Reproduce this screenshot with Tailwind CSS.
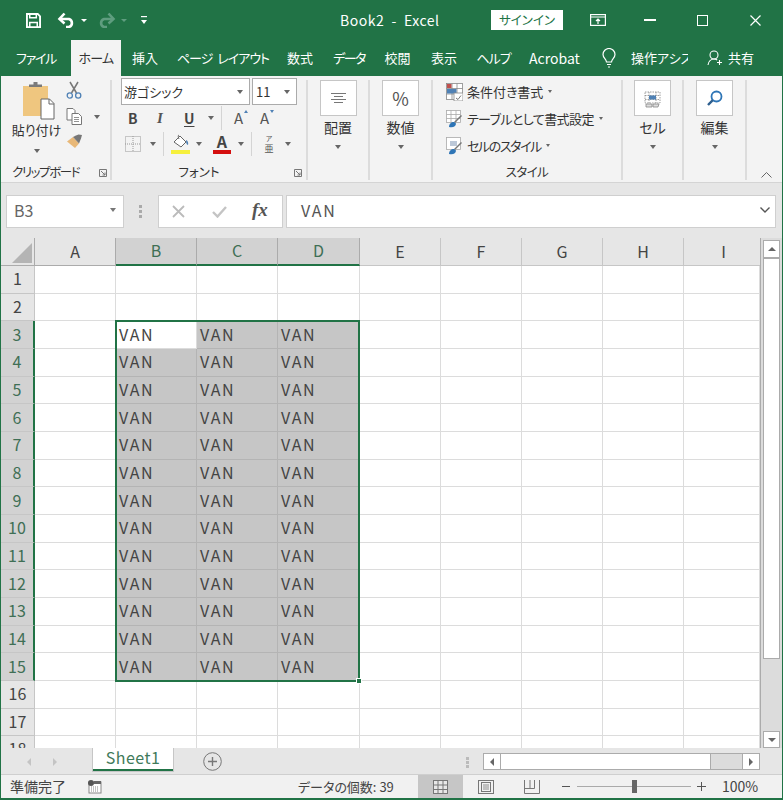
<!DOCTYPE html>
<html lang="ja"><head><meta charset="utf-8"><title>Book2 - Excel</title>
<script src="https://cdn.jsdelivr.net/npm/@tailwindcss/browser@4"></script></head>
<body class="m-0 bg-[#217346]">
<div class="flex h-[800px] w-[783px] flex-col overflow-hidden border-x border-b-2 border-[#217346] bg-[#e6e6e6] font-['Noto_Sans_CJK_JP','Noto_Sans',sans-serif] text-[#444] [font-feature-settings:'palt']">

<!-- title bar -->
<div class="flex h-10 shrink-0 items-center bg-[#217346] text-white">
  <svg class="ml-[25px] h-[15px] w-[15px]" viewBox="0 0 16 16" fill="none" stroke="#fff" stroke-width="2"><path d="M1 1h11.5L15 3.5V15H1z"/><path d="M4 1v4h7V1M4 15v-5h8v5" stroke-width="1.6"/></svg>
  <svg class="ml-[16px] h-[16px] w-[19px]" viewBox="0 0 19 16" fill="none" stroke="#fff" stroke-width="2.6"><path d="M3 7h9a4.2 4.2 0 0 1 0 8H9"/><path d="M7.5 1.5 2.5 7l5 4.5"/></svg>
  <span class="ml-[5px] h-0 w-0 border-x-[3px] border-t-[3px] border-x-transparent border-t-white"></span>
  <svg class="ml-[10px] h-[16px] w-[19px]" viewBox="0 0 19 16" fill="none" stroke="#5f9d7f" stroke-width="2.6"><path d="M16 7H7a4.2 4.2 0 0 0 0 8h3"/><path d="M11.500 1.500 16.500 7l-5 4.500"/></svg>
  <span class="ml-[5px] h-0 w-0 border-x-[3px] border-t-[3px] border-x-transparent border-t-[#5f9d7f]"></span>
  <svg class="ml-[14px] h-[8px] w-[6px]" viewBox="0 0 6 8" fill="#fff"><rect y="0" width="6" height="1.200"/><path d="M0 4h6L3 8z"/></svg>
  <span class="ml-[193px] w-[104px] whitespace-pre text-[14px] leading-none tracking-[0.5px]">Book2  -  Excel</span>
  <span class="ml-[47px] flex h-[20px] w-[72px] items-center justify-center bg-white text-[12.500px] text-[#217346]">サインイン</span>
  <svg class="ml-[27px] h-[12px] w-[16px]" viewBox="0 0 16 12" fill="none" stroke="#fff" stroke-width="1.200"><rect x=".6" y=".6" width="14.800" height="10.800"/><path d="M.6 3h14.800M8 10V5M6 7l2-2 2 2"/></svg>
  <span class="ml-[38px] h-[1.500px] w-[12px] bg-white"></span>
  <span class="ml-[41px] h-[11px] w-[11px] border-[1.500px] border-white"></span>
  <svg class="ml-[42px] h-[11px] w-[11px]" viewBox="0 0 11 11" stroke="#fff" stroke-width="1.200"><path d="M.5.500l10 10M10.500.500l-10 10"/></svg>
</div>

<!-- tabs -->
<div class="flex h-9 shrink-0 items-center bg-[#217346] text-[13px] text-white *:flex *:h-full *:items-center *:justify-center *:whitespace-nowrap">
  <div class="w-[70px] tracking-[-1.300px]">ファイル</div>
  <div class="w-[50px] bg-[#f3f3f3] tracking-[-0.800px] text-[#333]">ホーム</div>
  <div class="w-[48px]">挿入</div>
  <div class="w-[108px] tracking-[-1px] [word-spacing:3px]">ページ レイアウト</div>
  <div class="w-[46px]">数式</div>
  <div class="w-[52px] tracking-[-1.500px]">データ</div>
  <div class="w-[45px]">校閲</div>
  <div class="w-[48px]">表示</div>
  <div class="w-[51px] tracking-[-1px]">ヘルプ</div>
  <div class="w-[71px] text-[14px]">Acrobat</div>
  <div class="w-[37px]"><svg class="h-[20px] w-[14px]" viewBox="0 0 14 20" fill="none" stroke="#fff" stroke-width="1.200"><path d="M4.500 14c0-3-3.500-4-3.500-7.500a6 6 0 0 1 12 0c0 3.500-3.500 4.500-3.500 7.500zM5 16.500h4M6 19h2"/></svg></div>
  <div class="w-[65px] justify-start! overflow-hidden pl-[4px]"><span class="block w-[57px] overflow-hidden">操作アシスト</span></div>
  <div class="w-[15px]"></div>
  <div class="w-[16px]"><svg class="h-[16px] w-[16px]" viewBox="0 0 16 16" fill="none" stroke="#fff" stroke-width="1.100"><circle cx="7" cy="5" r="4"/><path d="M1 15c.5-3.500 3-6 6-6 1.200 0 2.300.400 3.200 1M12.500 10v5M10 12.500h5"/></svg></div>
  <div class="ml-[5px]">共有</div>
</div>

<!-- ribbon -->
<div class="flex h-[107px] shrink-0 border-b border-[#d4d4d4] bg-[#f3f3f3] pt-[2px]">
  <!-- clipboard -->
  <div class="relative flex w-[109px] flex-col pb-px">
    <div class="flex h-[84px]">
      <div class="flex w-[65px] flex-col items-center">
        <svg class="ml-[9px] mt-[4px] h-[38px] w-[33px]" viewBox="0 0 33 38"><rect x="1" y="4" width="25" height="30" fill="#efc67f"/><path d="M7 5V2.500h4.500V0h4v2.500H20V5z" fill="#7a7a7a"/><path d="M19 17h8.500l4.500 4.500V37H19z" fill="#fff" stroke="#666"/><path d="M27 17v5h5" fill="none" stroke="#666"/></svg>
        <span class="ml-[6px] whitespace-nowrap text-[13px] leading-[20px] text-[#333]">貼り付け</span>
        <span class="ml-[6px] mt-[9px] h-0 w-0 border-x-[3.500px] border-t-[4px] border-x-transparent border-t-[#666]"></span>
      </div>
      <div class="flex flex-col">
        <svg class="mt-[3px] h-[18px] w-[16px]" viewBox="0 0 16 18" fill="none"><path d="M4 1l6.500 11M12 1 5.500 12" stroke="#777" stroke-width="1.500"/><circle cx="3.800" cy="14.500" r="2.600" stroke="#4f81b5" stroke-width="1.300"/><circle cx="12.200" cy="14.500" r="2.600" stroke="#4f81b5" stroke-width="1.300"/></svg>
        <div class="mt-[9px] flex items-center">
          <svg class="h-[17px] w-[17px]" viewBox="0 0 17 17" fill="#fff" stroke="#777"><path d="M1 .5h6l2 2V12H1z"/><path d="M6 5.500h6.500l3 3v8H6z"/><path d="M8 9.500h5M8 11.500h5M8 13.500h5" stroke-width=".8"/></svg>
          <span class="ml-[11px] h-0 w-0 border-x-[3.500px] border-t-[4px] border-x-transparent border-t-[#666]"></span>
        </div>
        <svg class="ml-px mt-[9px] h-[15px] w-[16px]" viewBox="0 0 16 15"><path d="M0 7.500 6 3l6 6.500L8 14z" fill="#e8b878"/><path d="M6 3l3-1.500 2.500-1L15 1l-1 3.500-2 5z" fill="#777"/></svg>
      </div>
    </div>
    <div class="mt-auto pl-[11px] text-[12.500px] leading-[18px] tracking-[-1.400px] text-[#333]">クリップボード</div>
    <svg class="absolute bottom-[5px] right-[3px] h-[8px] w-[8px]" viewBox="0 0 8 8" fill="none" stroke="#777"><path d="M.5 7.500v-7h7v7zM2 2l4 4M6 3.500V6H3.500"/></svg>
  </div>
  <div class="my-[2px] w-[2px] bg-[#dcdcdc]"></div>

  <!-- font -->
  <div class="relative flex w-[194px] flex-col pb-px">
    <div class="ml-[9px] flex h-[27px] gap-[2px] text-[13px] text-[#333]">
      <div class="flex w-[129px] items-center justify-between border border-[#ababab] bg-white pl-[2px] pr-[6px]"><span>游ゴシック</span><span class="h-0 w-0 border-x-[3.500px] border-t-[4px] border-x-transparent border-t-[#666]"></span></div>
      <div class="flex w-[45px] items-center justify-between border border-[#ababab] bg-white pl-[3px] pr-[6px]"><span>11</span><span class="h-0 w-0 border-x-[3.500px] border-t-[4px] border-x-transparent border-t-[#666]"></span></div>
    </div>
    <div class="ml-[16px] flex h-[26px] items-center">
      <span class="w-[29px] text-[14px] font-bold text-[#444]">B</span>
      <span class="w-[27px] font-['Liberation_Serif'] text-[15px] font-bold italic text-[#555]">I</span>
      <span class="w-[24px] text-[14px] font-bold text-[#444] underline underline-offset-2">U</span>
      <span class="h-0 w-0 border-x-[3.500px] border-t-[4px] border-x-transparent border-t-[#666]"></span>
      <span class="ml-[7px] h-[24px] w-px bg-[#d4d4d4]"></span>
      <span class="relative ml-[12px] w-[26px] text-[15px] text-[#555]">A<span class="absolute left-[10px] top-[3px] h-0 w-0 border-x-[2.500px] border-b-[3px] border-x-transparent border-b-[#4f81b5]"></span></span>
      <span class="relative w-[20px] text-[15px] text-[#555]">A<span class="absolute left-[10px] top-[3px] h-0 w-0 border-x-[2.500px] border-t-[3px] border-x-transparent border-t-[#4f81b5]"></span></span>
    </div>
    <div class="ml-[13px] flex h-[25px] items-center">
      <svg class="h-[16px] w-[16px]" viewBox="0 0 16 16" fill="none" stroke="#999" stroke-dasharray="1 1"><rect x=".5" y=".5" width="15" height="15"/><path d="M8 0v16M0 8h16"/></svg>
      <span class="ml-[9px] h-0 w-0 border-x-[3.500px] border-t-[4px] border-x-transparent border-t-[#666]"></span>
      <span class="ml-[7px] h-[24px] w-px bg-[#d4d4d4]"></span>
      <svg class="ml-[7px] h-[20px] w-[19px]" viewBox="0 0 19 20"><path d="M3 8 9 2l6 6-5 5z" fill="#fff" stroke="#666"/><path d="M8 1c-1 0-1 2 0 4" fill="none" stroke="#666"/><path d="M15 6c2 .500 2.500 3 2 5-1.500-.500-2-2-2-5z" fill="#4f81b5"/><rect y="16" width="19" height="4" fill="#f6f03c"/></svg>
      <span class="ml-[6px] h-0 w-0 border-x-[3.500px] border-t-[4px] border-x-transparent border-t-[#666]"></span>
      <div class="ml-[11px] flex w-[18px] flex-col items-center"><span class="text-[16px] font-bold leading-[14px] text-[#444]">A</span><span class="mt-[2px] h-[4px] w-[18px] bg-[#d40f0f]"></span></div>
      <span class="ml-[7px] h-0 w-0 border-x-[3.500px] border-t-[4px] border-x-transparent border-t-[#666]"></span>
      <span class="ml-[7px] h-[24px] w-px bg-[#d4d4d4]"></span>
      <div class="ml-[11px] flex w-[12px] flex-col items-center gap-[2px] text-[#555]"><span class="text-[7px] leading-[7px]">ア</span><span class="text-[9px] leading-[9px]">亜</span></div>
      <span class="ml-[10px] h-0 w-0 border-x-[3.500px] border-t-[4px] border-x-transparent border-t-[#666]"></span>
    </div>
    <div class="mt-auto pr-[20px] text-center text-[12.500px] leading-[18px] text-[#333]">フォント</div>
    <svg class="absolute bottom-[5px] right-[4px] h-[8px] w-[8px]" viewBox="0 0 8 8" fill="none" stroke="#777"><path d="M.5 7.500v-7h7v7zM2 2l4 4M6 3.500V6H3.500"/></svg>
  </div>
  <div class="my-[2px] w-[2px] bg-[#dcdcdc]"></div>

  <!-- alignment -->
  <div class="flex w-[60px] flex-col items-center">
    <div class="mt-[2px] flex h-[36px] w-[37px] items-center justify-center border border-[#c6c6c6] bg-white"><svg class="h-[10px] w-[15px]" viewBox="0 0 15 10" stroke="#777"><path d="M0 .5h15M3 3.500h9M0 6.500h15M3 9.500h9"/></svg></div>
    <span class="mt-px text-[14px] leading-[20px] text-[#333]">配置</span>
    <span class="mt-[8px] h-0 w-0 border-x-[3.500px] border-t-[4px] border-x-transparent border-t-[#666]"></span>
  </div>
  <div class="my-[2px] w-[2px] bg-[#dcdcdc]"></div>

  <!-- number -->
  <div class="flex w-[61px] flex-col items-center">
    <div class="mt-[2px] flex h-[36px] w-[37px] items-center justify-center border border-[#c6c6c6] bg-white text-[18px] text-[#555]">%</div>
    <span class="mt-px text-[14px] leading-[20px] text-[#333]">数値</span>
    <span class="mt-[8px] h-0 w-0 border-x-[3.500px] border-t-[4px] border-x-transparent border-t-[#666]"></span>
  </div>
  <div class="my-[2px] w-[2px] bg-[#dcdcdc]"></div>

  <!-- styles -->
  <div class="flex w-[188px] flex-col pb-px pl-[13px] text-[13px] text-[#333]">
    <div class="flex h-[27px] items-center">
      <svg class="h-[18px] w-[17px]" viewBox="0 0 17 18" fill="#fff" stroke="#888" stroke-width=".8"><rect x=".5" y=".5" width="16" height="16"/><path d="M.5 5.500h16M.5 11h16M6 .5v16M11 .5v16"/><rect x="1" y="1" width="4.500" height="4" fill="#c0504d" stroke="none"/><rect x="1" y="6" width="9.500" height="4.500" fill="#4f81b5" stroke="none"/><rect x="8" y="10" width="9" height="8" fill="#fff"/><path d="M10 15l2 1.500 3-4" fill="none" stroke="#555"/></svg>
      <span class="ml-[4px]">条件付き書式</span><span class="ml-[5px] h-0 w-0 border-x-[2.500px] border-t-[3px] border-x-transparent border-t-[#666]"></span>
    </div>
    <div class="flex h-[27px] items-center">
      <svg class="h-[18px] w-[17px]" viewBox="0 0 17 18" fill="#fff" stroke="#aaa" stroke-width=".8"><rect x=".5" y=".5" width="14" height="12"/><path d="M.5 4.500h14M.5 8.500h14M5 .5v12M10 .5v12"/><path d="M16 6 9 13l-1-1 7-7z" fill="#777" stroke="none"/><path d="M3 17c0-3 2-5 5-5l2 1.500c0 3-3 4.500-7 3.500z" fill="#2e75b6" stroke="none"/></svg>
      <span class="ml-[4px] whitespace-nowrap tracking-[-0.600px]">テーブルとして書式設定</span><span class="ml-[5px] h-0 w-0 border-x-[2.500px] border-t-[3px] border-x-transparent border-t-[#666]"></span>
    </div>
    <div class="flex h-[27px] items-center">
      <svg class="h-[18px] w-[17px]" viewBox="0 0 17 18" fill="#fff" stroke="#aaa" stroke-width=".8"><rect x=".5" y=".5" width="14" height="12"/><rect x="4" y="4" width="7" height="5" fill="#bcc8d8" stroke="none"/><path d="M16 6 9 13l-1-1 7-7z" fill="#777" stroke="none"/><path d="M3 17c0-3 2-5 5-5l2 1.500c0 3-3 4.500-7 3.500z" fill="#2e75b6" stroke="none"/></svg>
      <span class="ml-[4px] tracking-[-1.400px]">セルのスタイル</span><span class="ml-[5px] h-0 w-0 border-x-[2.500px] border-t-[3px] border-x-transparent border-t-[#666]"></span>
    </div>
    <div class="-ml-[13px] mt-auto text-center text-[12.500px] leading-[18px] tracking-[-0.500px]">スタイル</div>
  </div>
  <div class="my-[2px] w-[2px] bg-[#dcdcdc]"></div>

  <!-- cells -->
  <div class="flex w-[59px] flex-col items-center">
    <div class="mt-[2px] flex h-[36px] w-[37px] items-center justify-center border border-[#c6c6c6] bg-white"><svg class="h-[19px] w-[17px]" viewBox="0 0 17 19" fill="none" stroke="#888" stroke-width=".8"><path d="M1 3h15v11H1zM1 6.500h15M1 10.500h15M5 3v11M12 3v11" stroke-dasharray="1.500 1"/><rect x="5" y="6.500" width="7" height="4" fill="#4f81b5" stroke="none"/><path d="M2 15h6v3H2zM9 15h6l-1 3H9z" fill="#ddd"/></svg></div>
    <span class="mt-px text-[14px] leading-[20px] text-[#333]">セル</span>
    <span class="mt-[8px] h-0 w-0 border-x-[3.500px] border-t-[4px] border-x-transparent border-t-[#666]"></span>
  </div>
  <div class="my-[2px] w-[2px] bg-[#dcdcdc]"></div>

  <!-- editing -->
  <div class="flex w-[61px] flex-col items-center">
    <div class="mt-[2px] flex h-[36px] w-[37px] items-center justify-center border border-[#c6c6c6] bg-white"><svg class="h-[16px] w-[16px]" viewBox="0 0 16 16" fill="none"><circle cx="9.500" cy="6.500" r="5" stroke="#2e75b6" stroke-width="1.800"/><path d="M5.800 10.200 1 15" stroke="#2e5f8f" stroke-width="2.400"/></svg></div>
    <span class="mt-px text-[14px] leading-[20px] text-[#333]">編集</span>
    <span class="mt-[8px] h-0 w-0 border-x-[3.500px] border-t-[4px] border-x-transparent border-t-[#666]"></span>
  </div>
  <div class="my-[2px] w-[2px] bg-[#dcdcdc]"></div>
  <div class="flex flex-1 items-end justify-end pb-[4px] pr-[10px]"><svg class="h-[6px] w-[11px]" viewBox="0 0 11 6" fill="none" stroke="#666"><path d="M.5 5.500l5-5 5 5"/></svg></div>
</div>

<!-- formula bar -->
<div class="flex h-[55px] shrink-0 items-start bg-[#e6e6e6] pl-[5px] pt-[12px]">
  <div class="flex h-[33px] w-[118px] items-center justify-between border border-[#cfcfcf] bg-white pb-[3px] pl-[7px] pr-[7px] text-[16px] text-[#666]"><span>B3</span><span class="h-0 w-0 border-x-[3.500px] border-t-[4px] border-x-transparent border-t-[#777]"></span></div>
  <div class="ml-[15px] mt-[10px] flex w-[3px] flex-col gap-[2px] *:h-[3px] *:bg-[#aaa]"><span></span><span></span><span></span></div>
  <div class="ml-[16px] flex h-[33px] w-[125px] items-center border border-[#cfcfcf] bg-white">
    <svg class="ml-[13px] h-[13px] w-[13px]" viewBox="0 0 13 13" stroke="#bbb" stroke-width="1.800"><path d="M1 1l11 11M12 1 1 12"/></svg>
    <svg class="ml-[27px] h-[12px] w-[15px]" viewBox="0 0 15 12" fill="none" stroke="#c4c4c4" stroke-width="2.400"><path d="M1 6l4.500 4.500L14 1"/></svg>
    <span class="ml-[25px] pb-[3px] font-['Liberation_Serif'] text-[19px] font-bold italic text-[#555]">fx</span>
  </div>
  <div class="ml-[3px] flex h-[33px] w-[490px] items-center justify-between border border-[#cfcfcf] bg-white pb-[3px] pl-[14px] pr-[5px] text-[16px] tracking-[1.800px] text-[#555]"><span>VAN</span><svg class="h-[6px] w-[10px]" viewBox="0 0 10 6" fill="none" stroke="#555" stroke-width="1.400"><path d="M.5.500 5 5 9.500.500"/></svg></div>
</div>

<!-- sheet -->
<div class="flex h-[510px] shrink-0">
  <div class="relative h-full w-[759px] overflow-hidden bg-white">
    <div class="grid auto-rows-[27.67px] grid-cols-[34px_81px_81px_81px_82px_81px_81px_81px_81px_76px] grid-rows-[28px] text-[16px] tracking-[1.700px] text-[#444] *:flex *:items-center *:border-r *:border-b *:border-[#dcdcdc] *:pb-[2px]">
      <div class="relative border-[#ababab]! bg-[#e6e6e6]"><span class="absolute bottom-[2px] right-[2px] h-0 w-0 border-b-[20px] border-l-[20px] border-b-[#b4b4b4] border-l-transparent"></span></div>
      <div class="justify-center border-[#ababab]! bg-[#e6e6e6] tracking-normal">A</div>
      <div class="justify-center border-r-[#ababab]! border-b-2! border-b-[#217346]! bg-[#d2d2d2] tracking-normal text-[#3f6f55]">B</div>
      <div class="justify-center border-r-[#ababab]! border-b-2! border-b-[#217346]! bg-[#d2d2d2] tracking-normal text-[#3f6f55]">C</div>
      <div class="justify-center border-r-[#ababab]! border-b-2! border-b-[#217346]! bg-[#d2d2d2] tracking-normal text-[#3f6f55]">D</div>
      <div class="justify-center border-[#c6c6c6]! bg-[#e6e6e6] tracking-normal">E</div>
      <div class="justify-center border-[#c6c6c6]! bg-[#e6e6e6] tracking-normal">F</div>
      <div class="justify-center border-[#c6c6c6]! bg-[#e6e6e6] tracking-normal">G</div>
      <div class="justify-center border-[#c6c6c6]! bg-[#e6e6e6] tracking-normal">H</div>
      <div class="justify-center border-[#c6c6c6]! border-r-0! bg-[#e6e6e6] pl-[3px] tracking-normal">I</div>

      <div class="justify-center border-[#c6c6c6]! bg-[#e6e6e6] tracking-normal">1</div><div></div><div></div><div></div><div></div><div></div><div></div><div></div><div></div><div></div>
      <div class="justify-center border-[#c6c6c6]! bg-[#e6e6e6] tracking-normal">2</div><div></div><div></div><div></div><div></div><div></div><div></div><div></div><div></div><div></div>

      <div class="justify-center border-b-[#c6c6c6]! border-r-2! border-r-[#217346]! bg-[#d2d2d2] tracking-normal text-[#3f6f55]">3</div><div></div><div class="pl-[3px]">VAN</div><div class="border-[#b4b4b4]! bg-[#c6c6c6] pl-[3px]">VAN</div><div class="border-[#b4b4b4]! bg-[#c6c6c6] pl-[3px]">VAN</div><div></div><div></div><div></div><div></div><div></div>
      <div class="justify-center border-b-[#c6c6c6]! border-r-2! border-r-[#217346]! bg-[#d2d2d2] tracking-normal text-[#3f6f55]">4</div><div></div><div class="border-[#b4b4b4]! bg-[#c6c6c6] pl-[3px]">VAN</div><div class="border-[#b4b4b4]! bg-[#c6c6c6] pl-[3px]">VAN</div><div class="border-[#b4b4b4]! bg-[#c6c6c6] pl-[3px]">VAN</div><div></div><div></div><div></div><div></div><div></div>
      <div class="justify-center border-b-[#c6c6c6]! border-r-2! border-r-[#217346]! bg-[#d2d2d2] tracking-normal text-[#3f6f55]">5</div><div></div><div class="border-[#b4b4b4]! bg-[#c6c6c6] pl-[3px]">VAN</div><div class="border-[#b4b4b4]! bg-[#c6c6c6] pl-[3px]">VAN</div><div class="border-[#b4b4b4]! bg-[#c6c6c6] pl-[3px]">VAN</div><div></div><div></div><div></div><div></div><div></div>
      <div class="justify-center border-b-[#c6c6c6]! border-r-2! border-r-[#217346]! bg-[#d2d2d2] tracking-normal text-[#3f6f55]">6</div><div></div><div class="border-[#b4b4b4]! bg-[#c6c6c6] pl-[3px]">VAN</div><div class="border-[#b4b4b4]! bg-[#c6c6c6] pl-[3px]">VAN</div><div class="border-[#b4b4b4]! bg-[#c6c6c6] pl-[3px]">VAN</div><div></div><div></div><div></div><div></div><div></div>
      <div class="justify-center border-b-[#c6c6c6]! border-r-2! border-r-[#217346]! bg-[#d2d2d2] tracking-normal text-[#3f6f55]">7</div><div></div><div class="border-[#b4b4b4]! bg-[#c6c6c6] pl-[3px]">VAN</div><div class="border-[#b4b4b4]! bg-[#c6c6c6] pl-[3px]">VAN</div><div class="border-[#b4b4b4]! bg-[#c6c6c6] pl-[3px]">VAN</div><div></div><div></div><div></div><div></div><div></div>
      <div class="justify-center border-b-[#c6c6c6]! border-r-2! border-r-[#217346]! bg-[#d2d2d2] tracking-normal text-[#3f6f55]">8</div><div></div><div class="border-[#b4b4b4]! bg-[#c6c6c6] pl-[3px]">VAN</div><div class="border-[#b4b4b4]! bg-[#c6c6c6] pl-[3px]">VAN</div><div class="border-[#b4b4b4]! bg-[#c6c6c6] pl-[3px]">VAN</div><div></div><div></div><div></div><div></div><div></div>
      <div class="justify-center border-b-[#c6c6c6]! border-r-2! border-r-[#217346]! bg-[#d2d2d2] tracking-normal text-[#3f6f55]">9</div><div></div><div class="border-[#b4b4b4]! bg-[#c6c6c6] pl-[3px]">VAN</div><div class="border-[#b4b4b4]! bg-[#c6c6c6] pl-[3px]">VAN</div><div class="border-[#b4b4b4]! bg-[#c6c6c6] pl-[3px]">VAN</div><div></div><div></div><div></div><div></div><div></div>
      <div class="justify-center border-b-[#c6c6c6]! border-r-2! border-r-[#217346]! bg-[#d2d2d2] tracking-normal text-[#3f6f55]">10</div><div></div><div class="border-[#b4b4b4]! bg-[#c6c6c6] pl-[3px]">VAN</div><div class="border-[#b4b4b4]! bg-[#c6c6c6] pl-[3px]">VAN</div><div class="border-[#b4b4b4]! bg-[#c6c6c6] pl-[3px]">VAN</div><div></div><div></div><div></div><div></div><div></div>
      <div class="justify-center border-b-[#c6c6c6]! border-r-2! border-r-[#217346]! bg-[#d2d2d2] tracking-normal text-[#3f6f55]">11</div><div></div><div class="border-[#b4b4b4]! bg-[#c6c6c6] pl-[3px]">VAN</div><div class="border-[#b4b4b4]! bg-[#c6c6c6] pl-[3px]">VAN</div><div class="border-[#b4b4b4]! bg-[#c6c6c6] pl-[3px]">VAN</div><div></div><div></div><div></div><div></div><div></div>
      <div class="justify-center border-b-[#c6c6c6]! border-r-2! border-r-[#217346]! bg-[#d2d2d2] tracking-normal text-[#3f6f55]">12</div><div></div><div class="border-[#b4b4b4]! bg-[#c6c6c6] pl-[3px]">VAN</div><div class="border-[#b4b4b4]! bg-[#c6c6c6] pl-[3px]">VAN</div><div class="border-[#b4b4b4]! bg-[#c6c6c6] pl-[3px]">VAN</div><div></div><div></div><div></div><div></div><div></div>
      <div class="justify-center border-b-[#c6c6c6]! border-r-2! border-r-[#217346]! bg-[#d2d2d2] tracking-normal text-[#3f6f55]">13</div><div></div><div class="border-[#b4b4b4]! bg-[#c6c6c6] pl-[3px]">VAN</div><div class="border-[#b4b4b4]! bg-[#c6c6c6] pl-[3px]">VAN</div><div class="border-[#b4b4b4]! bg-[#c6c6c6] pl-[3px]">VAN</div><div></div><div></div><div></div><div></div><div></div>
      <div class="justify-center border-b-[#c6c6c6]! border-r-2! border-r-[#217346]! bg-[#d2d2d2] tracking-normal text-[#3f6f55]">14</div><div></div><div class="border-[#b4b4b4]! bg-[#c6c6c6] pl-[3px]">VAN</div><div class="border-[#b4b4b4]! bg-[#c6c6c6] pl-[3px]">VAN</div><div class="border-[#b4b4b4]! bg-[#c6c6c6] pl-[3px]">VAN</div><div></div><div></div><div></div><div></div><div></div>
      <div class="justify-center border-b-[#c6c6c6]! border-r-2! border-r-[#217346]! bg-[#d2d2d2] tracking-normal text-[#3f6f55]">15</div><div></div><div class="border-[#b4b4b4]! bg-[#c6c6c6] pl-[3px]">VAN</div><div class="border-[#b4b4b4]! bg-[#c6c6c6] pl-[3px]">VAN</div><div class="border-[#b4b4b4]! bg-[#c6c6c6] pl-[3px]">VAN</div><div></div><div></div><div></div><div></div><div></div>

      <div class="justify-center border-[#c6c6c6]! bg-[#e6e6e6] tracking-normal">16</div><div></div><div></div><div></div><div></div><div></div><div></div><div></div><div></div><div></div>
      <div class="justify-center border-[#c6c6c6]! bg-[#e6e6e6] tracking-normal">17</div><div></div><div></div><div></div><div></div><div></div><div></div><div></div><div></div><div></div>
      <div class="justify-center border-[#c6c6c6]! bg-[#e6e6e6] tracking-normal">18</div><div></div><div></div><div></div><div></div><div></div><div></div><div></div><div></div><div></div>
    </div>
    <!-- selection outline -->
    <div class="absolute left-[114px] top-[82px] h-[362px] w-[245px] border-2 border-[#217346]"><span class="absolute -bottom-[4px] -right-[4px] h-[6px] w-[6px] border border-white bg-[#217346]"></span></div>
  </div>
  <!-- vertical scrollbar -->
  <div class="flex w-[22px] flex-col border-l border-[#ababab] bg-[#dcdcdc] pl-[2px] pr-[2px] pt-[2px]">
    <div class="flex h-[18px] shrink-0 items-center justify-center border border-[#ababab] bg-white"><span class="h-0 w-0 border-x-[4px] border-b-[4px] border-x-transparent border-b-[#666]"></span></div>
    <div class="h-[401px] shrink-0 border border-[#ababab] bg-white"></div>
    <div class="mt-auto flex h-[17px] shrink-0 items-center justify-center border border-[#ababab] bg-white"><span class="h-0 w-0 border-x-[4px] border-t-[4px] border-x-transparent border-t-[#666]"></span></div>
  </div>
</div>

<!-- sheet tabs -->
<div class="flex h-[26px] shrink-0 items-start bg-[#e6e6e6]">
  <span class="ml-[26px] mt-[10px] h-0 w-0 border-y-[4px] border-r-[4px] border-y-transparent border-r-[#c4c4c4]"></span>
  <span class="ml-[22px] mt-[10px] h-0 w-0 border-y-[4px] border-l-[4px] border-y-transparent border-l-[#c4c4c4]"></span>
  <div class="ml-[36px] flex h-[23px] w-[80px] items-center justify-center border-b-2 border-[#217346] bg-white pb-[3px] text-[16px] tracking-[0.5px] text-[#3f7a5a] outline outline-1 outline-[#c6c6c6]">Sheet1</div>
  <svg class="ml-[30px] mt-[4px] h-[19px] w-[19px]" viewBox="0 0 19 19" fill="none" stroke="#777"><circle cx="9.500" cy="9.500" r="8.800"/><path d="M9.500 5v9M5 9.500h9" stroke-width="1.400"/></svg>
  <div class="ml-[244px] mt-[9px] flex w-[3px] flex-col gap-[1px] *:h-[3px] *:bg-[#bbb]"><span></span><span></span><span></span></div>
  <div class="ml-[14px] mt-[5px] flex h-[17px] w-[277px] border border-[#ababab] bg-[#dcdcdc]">
    <div class="flex w-[17px] items-center justify-center border-r border-[#ababab] bg-white"><span class="h-0 w-0 border-y-[4px] border-r-[4px] border-y-transparent border-r-[#666]"></span></div>
    <div class="w-[210px] border-r border-[#ababab] bg-white"></div>
    <div class="ml-auto flex w-[17px] items-center justify-center border-l border-[#ababab] bg-white"><span class="h-0 w-0 border-y-[4px] border-l-[4px] border-y-transparent border-l-[#666]"></span></div>
  </div>
</div>

<!-- status bar -->
<div class="flex h-[24px] shrink-0 items-center border-t border-[#cfcfcf] bg-[#f1f1f1] text-[13px] text-[#444]">
  <span class="ml-[9px] w-[78px] text-[14px]">準備完了</span>
  <svg class="h-[14px] w-[14px]" viewBox="0 0 14 14"><rect x="1" y="2" width="12" height="11" fill="#fff" stroke="#888"/><circle cx="3" cy="3" r="3" fill="#555"/><rect x="6" y="1" width="7" height="3" fill="#666"/><path d="M3 7h8M3 9h8M3 11h8" stroke="#888" stroke-dasharray="1 1"/></svg>
  <span class="ml-[196px] w-[120px] whitespace-nowrap">データの個数: 39</span>
  <div class="flex h-full w-[45px] items-center justify-center bg-[#c6c6c6]"><svg class="h-[14px] w-[15px]" viewBox="0 0 15 14" fill="#e8e8e8" stroke="#777"><rect x=".5" y=".5" width="14" height="13"/><path d="M5 .5v13M10 .5v13M.5 5h14M.5 9.500h14"/></svg></div>
  <svg class="ml-[15px] h-[14px] w-[16px]" viewBox="0 0 16 14" fill="none" stroke="#777"><rect x=".5" y=".5" width="15" height="13"/><rect x="3.500" y="2.500" width="9" height="9"/><path d="M5 5h6M5 7h6M5 9h6" stroke-width=".8"/></svg>
  <svg class="ml-[30px] h-[14px] w-[16px]" viewBox="0 0 16 14" fill="none" stroke="#777"><path d="M.5 0v13.500h15V0M.5 8.500h10V0M6 0v8"/></svg>
  <span class="ml-[22px] h-px w-[8px] bg-[#555]"></span>
  <div class="relative ml-[7px] h-px w-[114px] bg-[#aaa]"><span class="absolute -top-[6px] left-[55px] h-[13px] w-[5px] bg-[#666]"></span></div>
  <svg class="ml-[6px] h-[9px] w-[9px]" viewBox="0 0 9 9" stroke="#555"><path d="M0 4.500h9M4.500 0v9"/></svg>
  <span class="ml-[16px] text-[14px]">100%</span>
</div>
</div>
</body></html>
